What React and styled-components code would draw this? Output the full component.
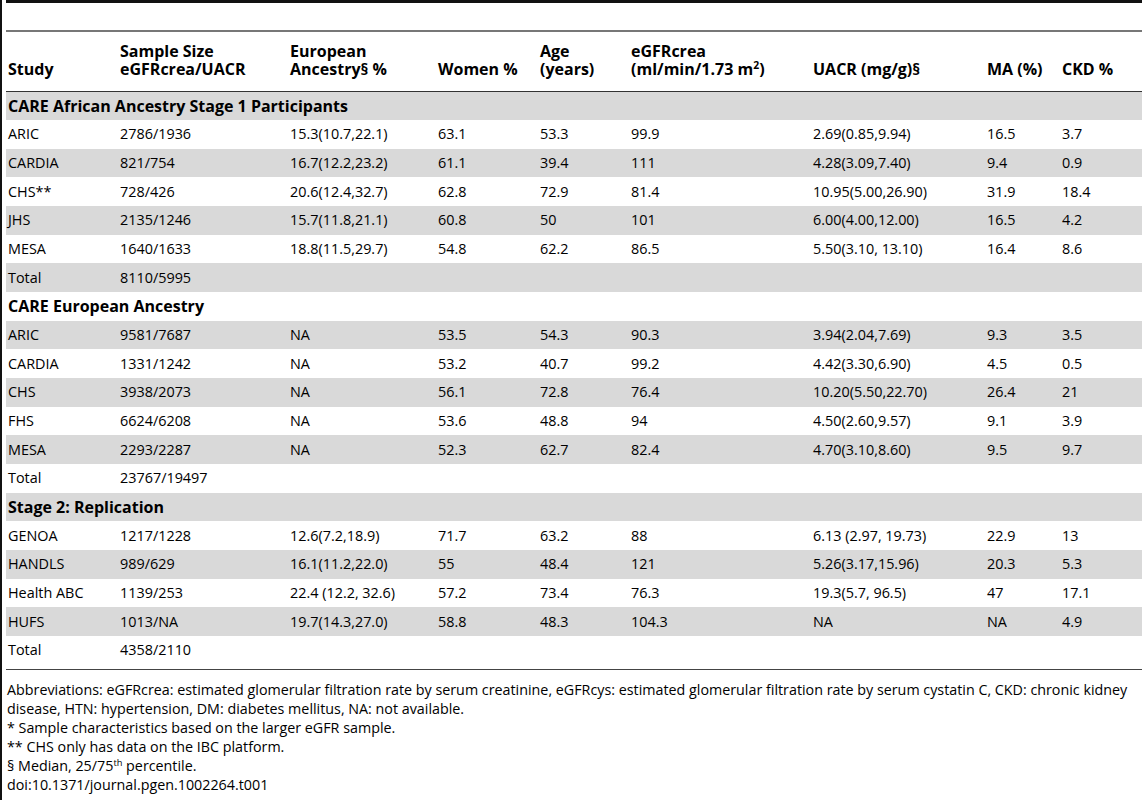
import React from 'react';
import styled, { createGlobalStyle } from 'styled-components';

const GlobalStyle = createGlobalStyle`
  html, body {
    margin: 0;
    padding: 0;
    background: #fff;
  }
  body {
    font-family: "Open Sans", "Noto Sans", sans-serif;
    color: #000;
  }
`;

const Page = styled.div`
  border-left: 2px solid #111;
  padding-left: 4px;
  min-height: 800px;
  box-sizing: border-box;
`;

const TopRule = styled.div`
  border-top: 3px solid #111;
  height: 27px;
  border-bottom: 2px solid #777;
`;

const Table = styled.table`
  width: 100%;
  border-collapse: collapse;
  table-layout: fixed;
  font-size: 14.4px;
  border-bottom: 1px solid #444;
`;

const Sup = styled.sup`
  font-size: 0.65em;
  line-height: 0;
  vertical-align: baseline;
  position: relative;
  top: -0.55em;
`;

const HeadRow = styled.tr`
  height: 59.5px;
`;

const HeadCell = styled.th`
  text-align: left;
  vertical-align: bottom;
  font-weight: 700;
  font-size: 16px;
  line-height: 18.5px;
  padding: 0 2px 12.5px 2px;
  border-bottom: 1px solid #333;
  white-space: nowrap;
`;

const Row = styled.tr`
  height: ${(p) => (p.$last ? '34px' : '28.67px')};
  background: ${(p) => (p.$shade ? '#d9d9d9' : '#fff')};

  td {
    padding-bottom: ${(p) => (p.$last ? '5.3px' : '0')};
  }
`;

const Cell = styled.td`
  padding: 0 2px;
  line-height: 18px;
  white-space: nowrap;
`;

const SectionCell = styled.td`
  padding: 0 2px;
  font-weight: 700;
  font-size: 16px;
  line-height: 18px;
  white-space: nowrap;
`;

const Footnotes = styled.div`
  padding: 10px 2px 0 1px;
  font-size: 14.3px;
  line-height: 19px;
`;

const Note = styled.div``;

const widths = [112, 170, 148, 102, 91, 182, 174, 75, 82];

const sections = [
  {
    title: 'CARE African Ancestry Stage 1 Participants',
    rows: [
      ['ARIC', '2786/1936', '15.3(10.7,22.1)', '63.1', '53.3', '99.9', '2.69(0.85,9.94)', '16.5', '3.7'],
      ['CARDIA', '821/754', '16.7(12.2,23.2)', '61.1', '39.4', '111', '4.28(3.09,7.40)', '9.4', '0.9'],
      ['CHS**', '728/426', '20.6(12.4,32.7)', '62.8', '72.9', '81.4', '10.95(5.00,26.90)', '31.9', '18.4'],
      ['JHS', '2135/1246', '15.7(11.8,21.1)', '60.8', '50', '101', '6.00(4.00,12.00)', '16.5', '4.2'],
      ['MESA', '1640/1633', '18.8(11.5,29.7)', '54.8', '62.2', '86.5', '5.50(3.10, 13.10)', '16.4', '8.6'],
      ['Total', '8110/5995', '', '', '', '', '', '', ''],
    ],
  },
  {
    title: 'CARE European Ancestry',
    rows: [
      ['ARIC', '9581/7687', 'NA', '53.5', '54.3', '90.3', '3.94(2.04,7.69)', '9.3', '3.5'],
      ['CARDIA', '1331/1242', 'NA', '53.2', '40.7', '99.2', '4.42(3.30,6.90)', '4.5', '0.5'],
      ['CHS', '3938/2073', 'NA', '56.1', '72.8', '76.4', '10.20(5.50,22.70)', '26.4', '21'],
      ['FHS', '6624/6208', 'NA', '53.6', '48.8', '94', '4.50(2.60,9.57)', '9.1', '3.9'],
      ['MESA', '2293/2287', 'NA', '52.3', '62.7', '82.4', '4.70(3.10,8.60)', '9.5', '9.7'],
      ['Total', '23767/19497', '', '', '', '', '', '', ''],
    ],
  },
  {
    title: 'Stage 2: Replication',
    rows: [
      ['GENOA', '1217/1228', '12.6(7.2,18.9)', '71.7', '63.2', '88', '6.13 (2.97, 19.73)', '22.9', '13'],
      ['HANDLS', '989/629', '16.1(11.2,22.0)', '55', '48.4', '121', '5.26(3.17,15.96)', '20.3', '5.3'],
      ['Health ABC', '1139/253', '22.4 (12.2, 32.6)', '57.2', '73.4', '76.3', '19.3(5.7, 96.5)', '47', '17.1'],
      ['HUFS', '1013/NA', '19.7(14.3,27.0)', '58.8', '48.3', '104.3', 'NA', 'NA', '4.9'],
      ['Total', '4358/2110', '', '', '', '', '', '', ''],
    ],
  },
];

function App() {
  let index = 0;
  const body = [];
  sections.forEach((section, s) => {
    body.push(
      <Row key={`s${index}`} $shade={index % 2 === 0}>
        <SectionCell colSpan={9}>{section.title}</SectionCell>
      </Row>
    );
    index += 1;
    section.rows.forEach((row, r) => {
      const last = s === sections.length - 1 && r === section.rows.length - 1;
      body.push(
        <Row key={`r${index}`} $shade={index % 2 === 0} $last={last}>
          {row.map((value, i) => (
            <Cell key={i}>{value}</Cell>
          ))}
        </Row>
      );
      index += 1;
    });
  });

  return (
    <Page>
      <GlobalStyle />
      <TopRule />
      <Table>
        <colgroup>
          {widths.map((w, i) => (
            <col key={i} style={{ width: w }} />
          ))}
        </colgroup>
        <thead>
          <HeadRow>
            <HeadCell>Study</HeadCell>
            <HeadCell>Sample Size<br />eGFRcrea/UACR</HeadCell>
            <HeadCell>European<br />Ancestry§ %</HeadCell>
            <HeadCell>Women %</HeadCell>
            <HeadCell>Age<br />(years)</HeadCell>
            <HeadCell>eGFRcrea<br />(ml/min/1.73 m<Sup>2</Sup>)</HeadCell>
            <HeadCell>UACR (mg/g)§</HeadCell>
            <HeadCell>MA (%)</HeadCell>
            <HeadCell>CKD %</HeadCell>
          </HeadRow>
        </thead>
        <tbody>{body}</tbody>
      </Table>
      <Footnotes>
        <Note>
          Abbreviations: eGFRcrea: estimated glomerular filtration rate by serum creatinine, eGFRcys: estimated
          glomerular filtration rate by serum cystatin C, CKD: chronic kidney disease, HTN: hypertension, DM:
          diabetes mellitus, NA: not available.
        </Note>
        <Note>* Sample characteristics based on the larger eGFR sample.</Note>
        <Note>** CHS only has data on the IBC platform.</Note>
        <Note>§ Median, 25/75<Sup>th</Sup> percentile.</Note>
        <Note>doi:10.1371/journal.pgen.1002264.t001</Note>
      </Footnotes>
    </Page>
  );
}

export default App;
